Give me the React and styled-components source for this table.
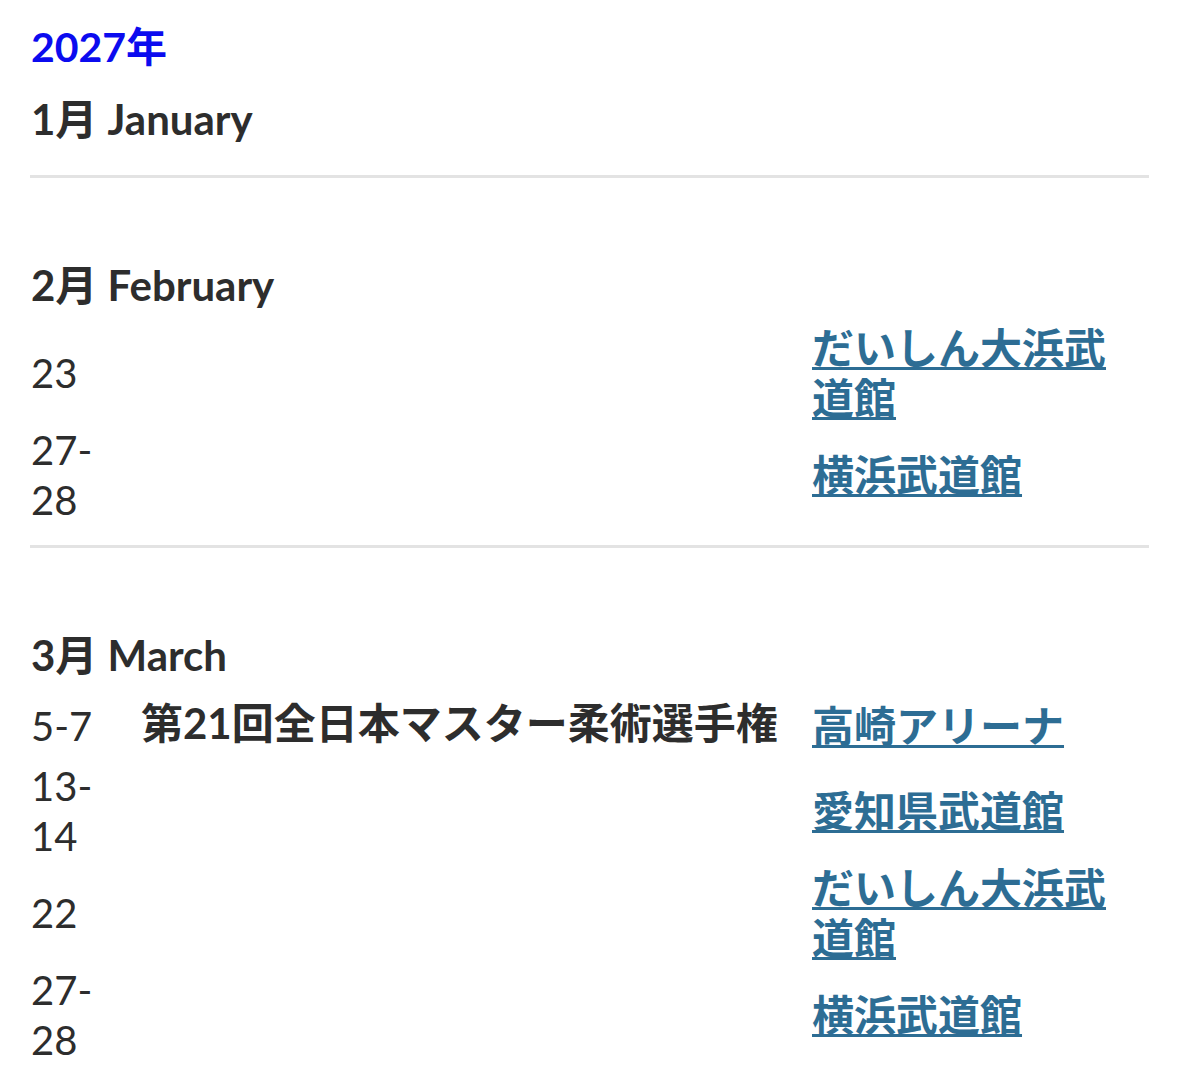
import React from 'react';
import styled, { createGlobalStyle } from 'styled-components';

const GlobalStyle = createGlobalStyle`
  html, body {
    margin: 0;
    padding: 0;
    background: #ffffff;
  }
  body {
    font-family: Lato, "Noto Sans CJK JP", sans-serif;
    color: #2d2d2d;
  }
`;

const Page = styled.div`
  padding: 21px 30px 0 30px;
`;

const YearTitle = styled.h2`
  margin: 0 0 20px 1px;
  font-size: 41px;
  line-height: 52px;
  font-weight: 700;
  color: #0b0bef;
`;

const MonthTitle = styled.h3`
  margin: 0 0 0 1px;
  padding-bottom: 11px;
  font-size: 42px;
  line-height: 52px;
  font-weight: 700;
  color: #2d2d2d;
`;

const Divider = styled.hr`
  margin: 19px 0 81px 0;
  border: none;
  height: 3px;
  background: #e3e3e3;
`;

const Schedule = styled.div`
  display: flex;
  flex-direction: column;
`;

const Row = styled.div`
  display: grid;
  grid-template-columns: 111px 671px 1fr;
  align-items: center;
  padding: 1px 0;
`;

const DateCell = styled.div`
  width: 72px;
  padding-left: 1px;
  font-size: 40px;
  line-height: 50px;
  word-break: break-all;
`;

const TitleCell = styled.div`
  font-size: 42px;
  line-height: ${(p) => (p.$empty ? '50px' : '60px')};
  padding-bottom: ${(p) => (p.$empty ? '0' : '6px')};
  font-weight: 700;
  white-space: nowrap;
`;

const VenueCell = styled.div`
  width: 300px;
  font-size: 42px;
  line-height: 50px;
  font-weight: 700;
`;

const VenueLink = styled.a`
  color: #2d6d94;
  text-decoration: underline;
  text-decoration-thickness: 3px;
  text-underline-offset: 3px;
`;

const months = [
  { label: '1月 January', events: [] },
  {
    label: '2月 February',
    events: [
      { date: '23', title: '', venue: 'だいしん大浜武道館' },
      { date: '27-28', title: '', venue: '横浜武道館' },
    ],
  },
  {
    label: '3月 March',
    events: [
      { date: '5-7', title: '第21回全日本マスター柔術選手権', venue: '高崎アリーナ' },
      { date: '13-14', title: '', venue: '愛知県武道館' },
      { date: '22', title: '', venue: 'だいしん大浜武道館' },
      { date: '27-28', title: '', venue: '横浜武道館' },
    ],
  },
];

export default function App() {
  return (
    <Page>
      <GlobalStyle />
      <YearTitle>2027年</YearTitle>
      {months.map((m, i) => (
        <React.Fragment key={m.label}>
          <MonthTitle>{m.label}</MonthTitle>
          <Schedule>
            {m.events.map((e, j) => (
              <Row key={j}>
                <DateCell>{e.date}</DateCell>
                <TitleCell $empty={!e.title}>{e.title}</TitleCell>
                <VenueCell>
                  <VenueLink href="#">{e.venue}</VenueLink>
                </VenueCell>
              </Row>
            ))}
          </Schedule>
          {i < months.length - 1 && <Divider />}
        </React.Fragment>
      ))}
    </Page>
  );
}
